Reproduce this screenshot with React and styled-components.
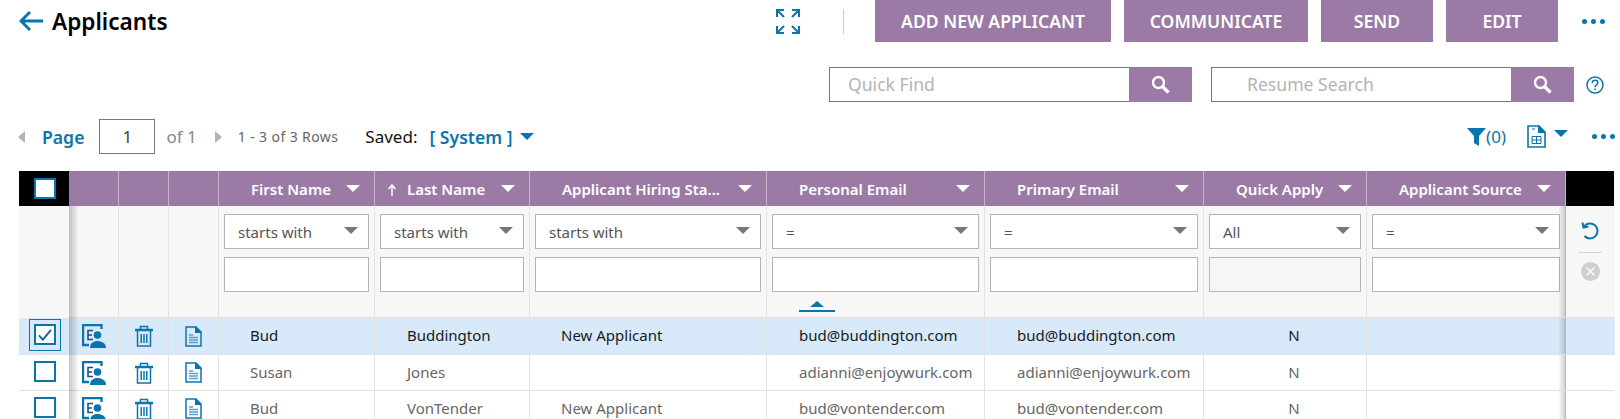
import React from 'react';
import styled, { createGlobalStyle } from 'styled-components';

const purple = '#9b7aa6';
const blue = '#0a75ad';
const columns = '50px 50px 50px 50px 156px 155px 237px 218px 219px 163px 199px 48px';

const Global = createGlobalStyle`
    html, body {
        margin: 0;
        height: 100%;
        overflow: hidden;
        background: #fff;
    }
    body {
        font-family: "Noto Sans", "Open Sans", sans-serif;
        font-size: 15px;
        color: #222;
    }
`;

const TopBar = styled.div`
    display: flex;
    align-items: flex-start;
    height: 42px;
    padding: 0 15px 0 19px;
`;

const BackButton = styled.button`
    display: flex;
    border: 0;
    background: none;
    padding: 0;
    margin: 10px 9px 0 0;
    color: ${blue};
`;

const Title = styled.h1`
    margin: 5px 0 0;
    font-size: 22.6px;
    font-weight: 600;
    line-height: 34px;
    color: #000;
`;

const Spacer = styled.div`
    flex: 1;
`;

const IconButton = styled.span`
    display: flex;
    color: ${blue};
`;

const ExpandButton = styled(IconButton)`
    margin-top: 9px;
`;

const Divider = styled.span`
    width: 1px;
    height: 25px;
    margin: 9px 31px 0 43px;
    background: #ccc;
`;

const ActionButton = styled.button`
    height: 42px;
    width: ${p => p.$w}px;
    margin-right: 13px;
    border: 0;
    padding: 0;
    background: ${purple};
    color: #fff;
    font: 600 17.6px "Noto Sans", sans-serif;
    text-transform: uppercase;
`;

const Dots = styled.span`
    display: flex;
    gap: 4px;
    margin: ${p => p.$margin};
    & > i {
        width: 5px;
        height: 5px;
        border-radius: 50%;
        background: ${blue};
    }
`;

const SearchBar = styled.div`
    display: flex;
    align-items: center;
    justify-content: flex-end;
    height: 35px;
    margin-top: 25px;
    padding-right: 16px;
`;

const SearchGroup = styled.div`
    display: flex;
    width: ${p => p.$w}px;
    height: 35px;
    margin-right: ${p => p.$gap}px;
`;

const SearchText = styled.div`
    flex: 1;
    box-sizing: border-box;
    border: 1px solid #777;
    border-right: 0;
    padding-left: ${p => p.$pad}px;
    line-height: 33px;
    font-size: 17.6px;
    color: #b4b4b4;
`;

const SearchButton = styled.span`
    display: flex;
    align-items: center;
    justify-content: center;
    width: 63px;
    background: ${purple};
`;

const Pager = styled.div`
    display: flex;
    align-items: center;
    height: 35px;
    margin-top: 17px;
    padding-left: 18px;
`;

const Caret = styled.span`
    flex: none;
    width: 0;
    height: 0;
    border-left: ${p => p.$size}px solid transparent;
    border-right: ${p => p.$size}px solid transparent;
    border-${p => (p.$up ? 'bottom' : 'top')}: ${p => p.$h || p.$size - 1}px solid ${p => p.$color || blue};
`;

const DocCaret = styled(Caret)`
    margin: -6px 0 0 8px;
`;

const SideArrow = styled.span`
    flex: none;
    width: 0;
    height: 0;
    border-top: 6px solid transparent;
    border-bottom: 6px solid transparent;
    border-${p => (p.$right ? 'left' : 'right')}: 7px solid #b3b3b3;
    margin: ${p => p.$margin};
`;

const PageLabel = styled.span`
    font-size: 17.6px;
    font-weight: 600;
    color: ${blue};
    margin-right: 15px;
`;

const PageInput = styled.div`
    box-sizing: border-box;
    width: 56px;
    height: 35px;
    border: 1px solid #777;
    text-align: center;
    font-size: 17px;
    line-height: 33px;
    color: #444;
`;

const OfText = styled.span`
    margin-left: 11px;
    font-size: 17px;
    color: #888;
`;

const RowCount = styled.span`
    font-size: 14px;
    color: #666;
    letter-spacing: 0.4px;
`;

const SavedLabel = styled.span`
    margin-left: 27px;
    font-size: 17px;
    color: #111;
`;

const SavedValue = styled.span`
    margin: 0 7px 0 12px;
    font-size: 17.6px;
    font-weight: 600;
    color: ${blue};
    white-space: pre;
`;

const FilterCount = styled.span`
    margin: 0 21px 0 0;
    font-size: 17px;
    color: ${blue};
`;

const Grid = styled.div`
    margin: 17px 5px 0 19px;
`;

const Row = styled.div`
    display: grid;
    grid-template-columns: ${columns};
    height: ${p => p.$h}px;
    background: ${p => p.$bg || '#fff'};
    color: ${p => p.$color || '#666'};
`;

const HeadCell = styled.div`
    display: flex;
    align-items: center;
    justify-content: space-between;
    padding: 0 14px 0 32px;
    background: ${purple};
    border-right: 1px solid #c4b2cb;
    color: #fff;
    font-size: 15px;
    font-weight: 600;
    white-space: nowrap;
`;

const HeadPlain = styled.div`
    background: ${purple};
    border-right: 1px solid #c4b2cb;
`;

const BlackCell = styled.div`
    display: flex;
    align-items: center;
    justify-content: center;
    padding-left: 2px;
    background: #000;
`;

const SortArrow = styled.span`
    display: inline-flex;
    margin: 0 11px 0 -19px;
    vertical-align: -1px;
`;

const FilterCell = styled.div`
    display: flex;
    flex-direction: column;
    gap: 8px;
    box-sizing: border-box;
    padding: 8px 5px 0 5px;
    background: #f7f7f7;
    border-right: 1px solid #e2e2e2;
    border-bottom: 1px solid #e0e0e0;
`;

const FrozenEdge = styled.div`
    position: relative;
    &::after {
        content: '';
        position: absolute;
        top: 0;
        bottom: 0;
        left: 100%;
        width: 10px;
        background: linear-gradient(to right, rgba(0, 0, 0, 0.22), rgba(0, 0, 0, 0));
        z-index: 1;
    }
`;

const RightEdge = styled.div`
    position: relative;
    display: flex;
    flex-direction: column;
    align-items: center;
    border-bottom: 1px solid #e0e0e0;
    &::before {
        content: '';
        position: absolute;
        top: 0;
        bottom: 0;
        right: 100%;
        width: 8px;
        background: linear-gradient(to left, rgba(0, 0, 0, 0.2), rgba(0, 0, 0, 0));
    }
`;

const ResetButton = styled.span`
    display: flex;
    margin-top: 16px;
    color: ${blue};
`;

const RailLine = styled.span`
    width: 23px;
    height: 1px;
    margin: 12px 0 9px;
    background: #d4d4d4;
`;

const SelectBox = styled.div`
    display: flex;
    align-items: center;
    justify-content: space-between;
    box-sizing: border-box;
    height: 35px;
    border: 1px solid #b5b5b5;
    padding: 0 10px 0 13px;
    background: #fff;
    color: #555;
    font-size: 15px;
    & > span:last-child {
        margin-top: -3px;
    }
`;

const TextBox = styled.div`
    box-sizing: border-box;
    height: 35px;
    border: 1px solid #b5b5b5;
    background: ${p => (p.$disabled ? '#f6f6f6' : '#fff')};
`;

const CollapseTab = styled.div`
    display: flex;
    flex-direction: column;
    align-items: center;
    gap: 3px;
    width: 36px;
    margin: 1px 0 0 27px;
    & > i {
        display: block;
        width: 100%;
        height: 2px;
        background: ${blue};
    }
`;

const Cell = styled.div`
    box-sizing: border-box;
    display: flex;
    align-items: center;
    justify-content: ${p => (p.$center ? 'center' : 'flex-start')};
    padding-left: ${p => p.$pad ?? 32}px;
    padding-bottom: 2px;
    border-right: 1px solid #e2e2e2;
    border-bottom: 1px solid #e0e0e0;
    font-size: 15px;
    white-space: nowrap;
`;

const IconCell = styled(Cell)`
    justify-content: center;
    padding: 0;
    color: ${blue};
`;

const SelectCell = styled.div`
    display: flex;
    align-items: center;
    justify-content: center;
    box-sizing: border-box;
    border-bottom: 1px solid #e0e0e0;
    height: 100%;
    padding-left: 2px;
`;

const CheckFocus = styled.span`
    display: flex;
    align-items: center;
    justify-content: center;
    box-sizing: border-box;
    width: 32px;
    height: 32px;
    margin-top: -3px;
    border: ${p => (p.$on ? `1px solid ${blue}` : '0')};
`;

const Check = styled.span`
    display: flex;
    align-items: center;
    justify-content: center;
    box-sizing: border-box;
    width: 22px;
    height: 21px;
    border: 2px solid ${blue};
    background: #fff;
`;

const ArrowIcon = () => (
    <svg width="24" height="22" viewBox="0 0 24 22" fill="none" stroke="currentColor" strokeWidth="3">
        <path d="M24 11H3M11 2l-9 9 9 9" />
    </svg>
);

const ExpandIcon = () => (
    <svg width="24" height="25" viewBox="0 0 24 25" fill="none" stroke="currentColor" strokeWidth="2">
        <path d="M1 8V1h7M1 1l7 7M16 1h7v7M23 1l-7 7M1 17v7h7M1 24l7-7M16 24h7v-7M23 24l-7-7" />
    </svg>
);

const SearchIcon = () => (
    <svg width="19" height="19" viewBox="0 0 19 19" fill="none" stroke="#fff">
        <circle cx="7.5" cy="7.5" r="5.5" strokeWidth="2.4" />
        <path d="M11.5 11.5L17.5 17.5" strokeWidth="3.4" />
    </svg>
);

const HelpIcon = () => (
    <svg width="18" height="18" viewBox="0 0 18 18" fill="none" stroke={blue} strokeWidth="1.5">
        <circle cx="9" cy="9" r="8" />
        <path d="M6.3 7c0-1.7 1.2-2.7 2.8-2.7S11.8 5.3 11.8 6.8c0 2-2.8 2.2-2.8 4.4" />
        <path d="M9 12.5V14" />
    </svg>
);

const FunnelIcon = () => (
    <svg width="19" height="18" viewBox="0 0 19 18">
        <path d="M0 0h19l-7 8v10l-5-3V8z" fill={blue} />
    </svg>
);

const GridDocIcon = () => (
    <svg width="19" height="23" viewBox="0 0 19 23" fill="none">
        <path d="M1 1h11l6 6v15H1z" stroke={blue} strokeWidth="1.6" />
        <path d="M11 0l8 8h-8z" fill={blue} />
        <path d="M5 4h3" stroke={blue} />
        <path d="M5 11.5h9v7H5zM5 15h9M9.5 11.5v7" stroke={blue} />
    </svg>
);

const ApplicantIcon = () => (
    <svg width="24" height="24" viewBox="0 0 24 24" fill="none">
        <path d="M19.5 5V1H1v20h6" stroke={blue} strokeWidth="2.4" />
        <path d="M11 6.5H6v9h5M6 11h4" stroke="#1f4f7c" strokeWidth="1.6" />
        <circle cx="15.5" cy="11" r="3.8" fill={blue} />
        <path d="M8 24c0-5 3.5-7 7.5-7s8.5 2 8.5 7z" fill={blue} />
    </svg>
);

const TrashIcon = () => (
    <svg width="18" height="22" viewBox="0 0 18 22" fill="none" stroke={blue}>
        <path d="M0 5h18" strokeWidth="2.5" />
        <path d="M5.5 4V1.5h7V4" strokeWidth="1.5" />
        <path d="M2.5 6v15h13V6" strokeWidth="1.5" />
        <path d="M6.2 9v9M9 9v9M11.8 9v9" strokeWidth="1.5" />
    </svg>
);

const FileIcon = () => (
    <svg width="17" height="21" viewBox="0 0 17 21" fill="none">
        <path d="M1 1h10l5 5v14H1z" stroke={blue} strokeWidth="1.5" />
        <path d="M10 0l7 7h-7z" fill={blue} />
        <path d="M4 9h4M4 11.5h9M4 14h9M4 16.5h9" stroke="#5a9fcb" strokeWidth="1.3" />
    </svg>
);

const CheckMark = () => (
    <svg width="14" height="12" viewBox="0 0 16 14" fill="none" stroke="#1a5f95" strokeWidth="2.2">
        <path d="M1 7.5l4.5 5L15 1" />
    </svg>
);

const UndoIcon = () => (
    <svg width="18" height="18" viewBox="0 0 18 18" fill="none" stroke="currentColor" strokeWidth="2">
        <path d="M3 4.5A7.5 7.5 0 1 1 3.5 14" />
        <path d="M1.5 0.5L2.5 5.5 7.5 4.5" />
    </svg>
);

const ClearIcon = () => (
    <svg width="19" height="19" viewBox="0 0 19 19" fill="none">
        <circle cx="9.5" cy="9.5" r="9.5" fill="#cfcfcf" />
        <path d="M5.5 5.5l8 8M13.5 5.5l-8 8" stroke="#fff" strokeWidth="1.3" />
    </svg>
);

const SmallUpArrow = () => (
    <svg width="8" height="12" viewBox="0 0 8 12" fill="none" stroke="#fff" strokeWidth="1.5">
        <path d="M4 12V1M0.5 5L4 1l3.5 4" />
    </svg>
);

const filters = [
    { op: 'starts with' },
    { op: 'starts with' },
    { op: 'starts with' },
    { op: '=', collapse: true },
    { op: '=' },
    { op: 'All', disabled: true },
    { op: '=' },
];

const heads = [
    'First Name',
    'Last Name',
    'Applicant Hiring Sta...',
    'Personal Email',
    'Primary Email',
    'Quick Apply',
    'Applicant Source',
];

const rows = [
    { first: 'Bud', last: 'Buddington', status: 'New Applicant', personal: 'bud@buddington.com', primary: 'bud@buddington.com', selected: true },
    { first: 'Susan', last: 'Jones', status: '', personal: 'adianni@enjoywurk.com', primary: 'adianni@enjoywurk.com' },
    { first: 'Bud', last: 'VonTender', status: 'New Applicant', personal: 'bud@vontender.com', primary: 'bud@vontender.com' },
];

export default function App() {
    return (
        <>
            <Global />
            <TopBar>
                <BackButton aria-label="Back"><ArrowIcon /></BackButton>
                <Title>Applicants</Title>
                <Spacer />
                <ExpandButton><ExpandIcon /></ExpandButton>
                <Divider />
                <ActionButton $w={236}>Add New Applicant</ActionButton>
                <ActionButton $w={184}>Communicate</ActionButton>
                <ActionButton $w={112}>Send</ActionButton>
                <ActionButton $w={112}>Edit</ActionButton>
                <Dots $margin="19px 0 0 11px"><i /><i /><i /></Dots>
            </TopBar>

            <SearchBar>
                <SearchGroup $w={363} $gap={19}>
                    <SearchText $pad={18}>Quick Find</SearchText>
                    <SearchButton><SearchIcon /></SearchButton>
                </SearchGroup>
                <SearchGroup $w={363} $gap={12}>
                    <SearchText $pad={35}>Resume Search</SearchText>
                    <SearchButton><SearchIcon /></SearchButton>
                </SearchGroup>
                <HelpIcon />
            </SearchBar>

            <Pager>
                <SideArrow $margin="0 17px 0 0" />
                <PageLabel>Page</PageLabel>
                <PageInput>1</PageInput>
                <OfText>of 1</OfText>
                <SideArrow $right $margin="0 16px 0 18px" />
                <RowCount>1 - 3 of 3 Rows</RowCount>
                <SavedLabel>Saved:</SavedLabel>
                <SavedValue>[ System ]</SavedValue>
                <Caret $size={7} $h={7} />
                <Spacer />
                <IconButton><FunnelIcon /></IconButton>
                <FilterCount>(0)</FilterCount>
                <GridDocIcon />
                <DocCaret $size={7} $h={7} />
                <Dots $margin="0 5px 0 24px"><i /><i /><i /></Dots>
            </Pager>

            <Grid>
                <Row $h={35}>
                    <BlackCell><Check /></BlackCell>
                    <HeadPlain />
                    <HeadPlain />
                    <HeadPlain />
                    {heads.map((h, i) => (
                        <HeadCell key={h}>
                            <span>
                                {i === 1 && <SortArrow><SmallUpArrow /></SortArrow>}
                                {h}
                            </span>
                            <Caret $size={7} $h={7} $color="#fff" />
                        </HeadCell>
                    ))}
                    <BlackCell />
                </Row>

                <Row $h={112} $bg="#f7f7f7">
                    <FrozenEdge />
                    <FilterCell />
                    <FilterCell />
                    <FilterCell />
                    {filters.map((f, i) => (
                        <FilterCell key={i}>
                            <SelectBox>
                                <span>{f.op}</span>
                                <Caret $size={7} $h={7} $color="#777" />
                            </SelectBox>
                            <TextBox $disabled={f.disabled} />
                            {f.collapse && (
                                <CollapseTab>
                                    <Caret $up $size={7} $h={6} />
                                    <i />
                                </CollapseTab>
                            )}
                        </FilterCell>
                    ))}
                    <RightEdge>
                        <ResetButton><UndoIcon /></ResetButton>
                        <RailLine />
                        <ClearIcon />
                    </RightEdge>
                </Row>

                {rows.map((r, i) => (
                    <Row key={i} $h={i === 0 ? 37 : 36} $bg={r.selected ? '#d8eafa' : '#fff'} $color={r.selected ? '#1a1a1a' : '#666'}>
                        <FrozenEdge>
                            <SelectCell>
                                <CheckFocus $on={r.selected}>
                                    <Check>{r.selected && <CheckMark />}</Check>
                                </CheckFocus>
                            </SelectCell>
                        </FrozenEdge>
                        <IconCell><ApplicantIcon /></IconCell>
                        <IconCell><TrashIcon /></IconCell>
                        <IconCell><FileIcon /></IconCell>
                        <Cell $pad={31}>{r.first}</Cell>
                        <Cell>{r.last}</Cell>
                        <Cell $pad={31}>{r.status}</Cell>
                        <Cell>{r.personal}</Cell>
                        <Cell>{r.primary}</Cell>
                        <Cell $center $pad={18}>N</Cell>
                        <Cell />
                        <RightEdge />
                    </Row>
                ))}
            </Grid>
        </>
    );
}
